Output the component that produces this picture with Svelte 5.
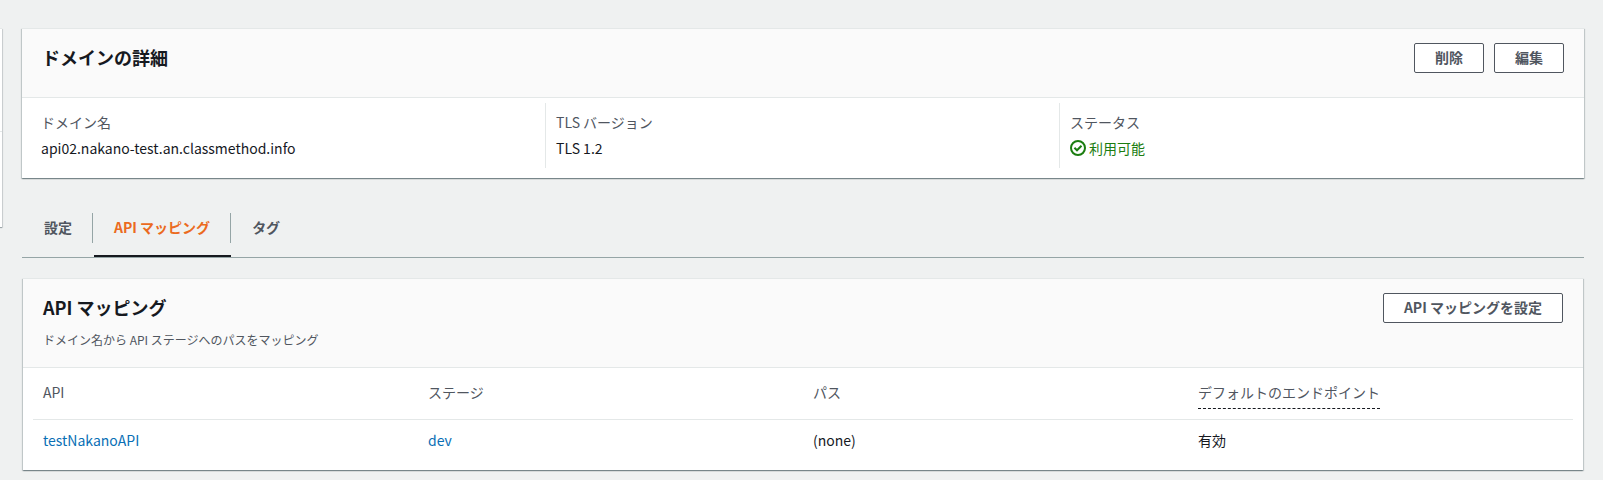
<script lang="ts">
  type Tab = { id: string; label: string };
  type Mapping = { api: string; stage: string; path: string; endpoint: string };

  const tabs: Tab[] = [
    { id: "settings", label: "設定" },
    { id: "mappings", label: "API マッピング" },
    { id: "tags", label: "タグ" },
  ];

  const mappings: Mapping[] = [
    { api: "testNakanoAPI", stage: "dev", path: "(none)", endpoint: "有効" },
  ];

  let activeTab = $state("mappings");
</script>

{#snippet iconCheck()}
  <svg class="icon" viewBox="0 0 16 16" fill="none" stroke="currentColor" stroke-width="2" aria-hidden="true">
    <circle cx="8" cy="8" r="7" />
    <path d="M4.4 7.8 7 10.3 11.5 5.8" />
  </svg>
{/snippet}

<div class="layout">
  <aside class="side">
    <div class="side-head"></div>
  </aside>

  <main>
    <section class="panel">
      <header class="panel-head">
        <h2>ドメインの詳細</h2>
        <div class="actions">
          <button class="btn">削除</button>
          <button class="btn">編集</button>
        </div>
      </header>
      <dl class="details">
        <div class="detail">
          <dt>ドメイン名</dt>
          <dd>api02.nakano-test.an.classmethod.info</dd>
        </div>
        <div class="detail">
          <dt>TLS バージョン</dt>
          <dd>TLS 1.2</dd>
        </div>
        <div class="detail">
          <dt>ステータス</dt>
          <dd class="status">{@render iconCheck()}利用可能</dd>
        </div>
      </dl>
    </section>

    <div class="tabs" role="tablist">
      {#each tabs as tab (tab.id)}
        <button
          class={["tab", activeTab === tab.id && "active"]}
          role="tab"
          aria-selected={activeTab === tab.id}
          onclick={() => (activeTab = tab.id)}
        >
          <span>{tab.label}</span>
        </button>
      {/each}
    </div>

    <section class="panel mappings">
      <header class="panel-head">
        <div>
          <h2>API マッピング</h2>
          <p>ドメイン名から API ステージへのパスをマッピング</p>
        </div>
        <div class="actions">
          <button class="btn">API マッピングを設定</button>
        </div>
      </header>
      <div class="table-wrap">
        <table>
          <thead>
            <tr>
              <th>API</th>
              <th>ステージ</th>
              <th>パス</th>
              <th><span class="hint">デフォルトのエンドポイント</span></th>
            </tr>
          </thead>
          <tbody>
            {#each mappings as row}
              <tr>
                <td><a href="#api">{row.api}</a></td>
                <td><a href="#stage">{row.stage}</a></td>
                <td>{row.path}</td>
                <td>{row.endpoint}</td>
              </tr>
            {/each}
          </tbody>
        </table>
      </div>
    </section>
  </main>
</div>

<style>
  :global(body) {
    margin: 0;
    background: #eff1f1;
    color: #16191f;
    font-family: "Noto Sans CJK JP", sans-serif;
    font-size: 14px;
    line-height: 22px;
  }

  h2,
  p,
  dl,
  dd {
    margin: 0;
  }

  button {
    font: inherit;
    font-weight: 700;
    color: #50565f;
    cursor: pointer;
  }

  .layout {
    display: flex;
    gap: 20px;
    padding: 28px 19px 9px 0;
  }

  .side,
  .panel {
    border-top: 1px solid #e4e8e8;
    background: #fff;
    box-shadow:
      0 1px 1px 0 rgba(0, 28, 36, 0.3),
      1px 1px 1px 0 rgba(0, 28, 36, 0.15),
      -1px 1px 1px 0 rgba(0, 28, 36, 0.15);
  }

  .side {
    flex: none;
    align-self: flex-start;
    width: 2px;
    height: 198px;
  }

  .side-head {
    height: 102px;
    border-bottom: 1px solid #e4e8e8;
  }

  main {
    flex: 1;
    min-width: 0;
  }

  .panel-head {
    display: flex;
    justify-content: space-between;
    align-items: flex-start;
    min-height: 40px;
    padding: 14px 20px;
    border-bottom: 1px solid #e4e8e8;
    background: #fafafa;
  }

  h2 {
    font-size: 18px;
    line-height: 28px;
  }

  .panel-head p {
    padding: 8px 0 2px;
    color: #50565f;
    font-size: 12px;
  }

  .actions {
    display: flex;
    gap: 10px;
  }

  .btn {
    padding: 2px 20px 4px;
    border: 1px solid #50565f;
    border-radius: 2px;
    background: #fff;
  }

  .details {
    display: grid;
    grid-template-columns: repeat(3, 1fr);
    padding: 5px 11px 10px 9px;
  }

  .detail {
    padding: 8px 10px 9px;
  }

  .detail + .detail {
    border-left: 1px solid #e4e8e8;
  }

  dt {
    color: #50565f;
  }

  dd {
    margin-top: 4px;
  }

  .status {
    display: flex;
    align-items: center;
    gap: 3px;
    color: #1b7d10;
  }

  .icon {
    width: 16px;
    height: 16px;
  }

  .tabs {
    display: flex;
    gap: 1px;
    margin-top: 35px;
    padding-left: 2px;
    border-bottom: 1px solid #95a5a6;
  }

  .tab {
    padding: 0 0 12px;
    border: 0;
    border-bottom: 2px solid transparent;
    background: none;
  }

  .tab span {
    display: block;
    padding: 3px 20px 5px;
  }

  .tab:not(:last-child) span {
    border-right: 1px solid #95a5a6;
  }

  .tab.active {
    border-color: #16191f;
    color: #eb6a20;
  }

  .mappings {
    margin: 20px 1px 0;
  }

  .table-wrap {
    padding: 0 10px 9px;
  }

  table {
    width: 100%;
    table-layout: fixed;
    border-collapse: collapse;
  }

  th,
  td {
    padding: 9px 10px 10px;
    font-weight: 400;
    text-align: left;
    vertical-align: top;
  }

  th {
    height: 32px;
    padding-top: 13px;
    padding-bottom: 6px;
    border-bottom: 1px solid #e4e8e8;
    color: #50565f;
  }

  .hint {
    display: inline-block;
    padding-bottom: 5px;
    border-bottom: 1px dashed #16191f;
  }

  a {
    color: #0a6fb5;
    text-decoration: none;
  }
</style>
